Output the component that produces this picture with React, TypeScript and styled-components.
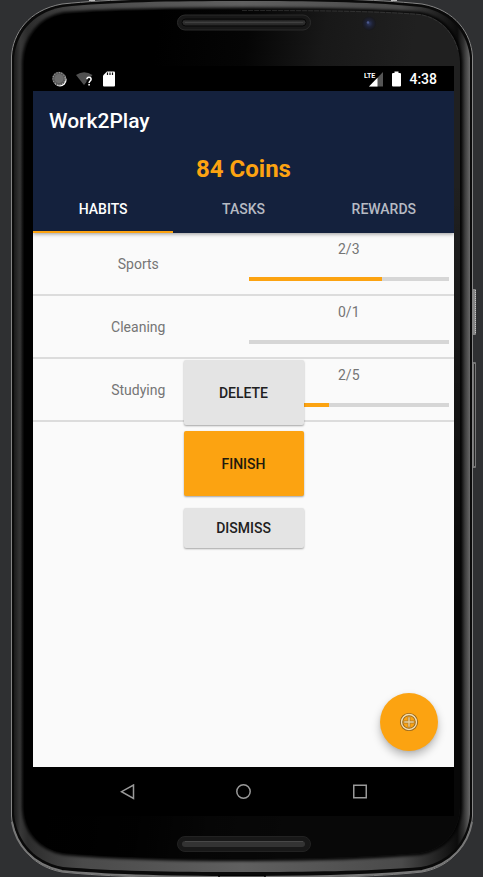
import React, { useState } from "react";
import styled, { createGlobalStyle } from "styled-components";

const amber = "#fca311";
const navy = "#14213d";

const GlobalStyle = createGlobalStyle`
  *, *::before, *::after { box-sizing: border-box; }
  body { margin: 0; background: #2f3032; font-family: Roboto, "Noto Sans", sans-serif; }
  button { font-family: inherit; cursor: pointer; }
`;

const Device = styled.div`
  position: relative;
  display: flex;
  min-height: 100vh;
  padding: 66px 29px 61px 33px;
  overflow: hidden;
`;

const Casing = styled.svg`
  position: absolute;
  inset: 0;
  width: 100%;
  height: 100%;
`;

const Screen = styled.div`
  position: relative;
  flex: 1;
  min-width: 0;
  display: flex;
  flex-direction: column;
  background: #000;
`;

const StatusBar = styled.div`
  display: flex;
  align-items: center;
  justify-content: space-between;
  height: 25px;
  padding: 0 17px 0 18px;
  color: #fff;
`;

const StatusGroup = styled.div<{ $gap: number }>`
  display: flex;
  align-items: center;
  gap: ${(p) => p.$gap}px;
`;

const Clock = styled.time`
  font-size: 14px;
  line-height: 16px;
  font-weight: 500;
`;

const AppBar = styled.header`
  position: relative;
  z-index: 1;
  background: ${navy};
  box-shadow: 0 1px 4px rgba(0, 0, 0, 0.4);
  clip-path: inset(0 0 -8px 0);
`;

const Title = styled.h1`
  margin: 0;
  padding: 18px 16px 0;
  font-size: 21px;
  line-height: 24px;
  font-weight: 500;
  color: #fff;
`;

const Balance = styled.p`
  margin: 0;
  padding-top: 22px;
  font-size: 24px;
  line-height: 28px;
  font-weight: 700;
  text-align: center;
  color: ${amber};
`;

const Tabs = styled.div`
  display: grid;
  grid-template-columns: repeat(3, 1fr);
`;

const Tab = styled.button<{ $active: boolean }>`
  height: 50px;
  padding: 3px 0 0;
  border: 0;
  border-bottom: 2px solid ${(p) => (p.$active ? amber : "transparent")};
  background: none;
  font-size: 14px;
  line-height: 16px;
  font-weight: 500;
  color: ${(p) => (p.$active ? "#fff" : "#b6bac3")};
`;

const Content = styled.main`
  position: relative;
  flex: 1;
  min-height: 400px;
  background: #fafafa;
`;

const HabitList = styled.ul`
  margin: 0;
  padding: 0;
  list-style: none;
`;

const HabitRow = styled.li`
  display: grid;
  grid-template-columns: 1fr 1fr;
  height: 63px;
  border-bottom: 2px solid #dcdcdc;
  font-size: 14px;
  line-height: 16px;
  color: #757575;
`;

const HabitName = styled.label`
  place-self: center;
`;

const HabitStatus = styled.div`
  display: flex;
  flex-direction: column;
  align-items: center;
  gap: 20px;
  padding: 8px 5px 0;
`;

const Meter = styled.progress`
  appearance: none;
  width: 100%;
  height: 4px;
  border: 0;
  background: #d6d6d6;
  &::-webkit-progress-bar { background: #d6d6d6; }
  &::-webkit-progress-value { background: ${amber}; }
  &::-moz-progress-bar { background: ${amber}; }
`;

const ActionMenu = styled.div`
  position: absolute;
  top: 127px;
  left: 0;
  right: 0;
  width: 120px;
  margin: 0 auto;
  display: flex;
  flex-direction: column;
  gap: 6px;
`;

const ActionButton = styled.button<{ $primary?: boolean; $compact?: boolean }>`
  height: ${(p) => (p.$compact ? 40 : 65)}px;
  margin-top: ${(p) => (p.$compact ? 6 : 0)}px;
  padding: 0;
  border: 0;
  border-radius: 2px;
  background: ${(p) => (p.$primary ? amber : "#e4e4e4")};
  box-shadow: 0 1px 2px rgba(0, 0, 0, 0.35);
  font-size: 14px;
  line-height: 16px;
  font-weight: 500;
  color: ${(p) => (p.$primary ? "#211a0d" : "#202020")};
`;

const AddButton = styled.button`
  position: absolute;
  right: 16px;
  bottom: 16px;
  width: 58px;
  height: 58px;
  padding: 0;
  border: 0;
  border-radius: 50%;
  display: grid;
  place-items: center;
  background: ${amber};
  box-shadow: 0 5px 9px rgba(0, 0, 0, 0.25), 0 1px 3px rgba(0, 0, 0, 0.08);
`;

const NavBar = styled.nav`
  display: flex;
  align-items: center;
  justify-content: center;
  gap: 92px;
  height: 49px;
`;

const NavButton = styled.button`
  display: grid;
  place-items: center;
  width: 24px;
  height: 24px;
  padding: 0;
  border: 0;
  background: none;
`;

const OUTER =
  "M11.5 56C13 34 28 10 62 4C110 -1 170 -2 242 -2C314 -2 374 -1 422 4C456 10 471 34 472.5 56V816C471 838 456 866 422 872C374 877 314 878 242 878C170 878 110 877 62 872C28 866 13 838 11.5 816Z";
const RIM =
  "M14 58C16 36 30 13 63 7C110 2 170 1 242 1C314 1 374 2 421 7C454 13 468 36 470 58V814C468 836 454 861 421 867C374 871 314 872 242 872C170 872 110 871 63 867C30 861 16 836 14 814Z";
const FACE =
  "M24 62C25 38 40 18 64 14C110 10 170 9.500 242 9.500C314 9.500 374 10 420 14C444 18 459 38 460 62V808C459 832 444 849 420 853C374 857 314 859 242 859C170 859 110 857 64 853C40 849 25 832 24 808Z";

function DeviceCasing() {
  return (
    <Casing viewBox="0 0 483 877" preserveAspectRatio="none" aria-hidden="true">
      <defs>
        <linearGradient id="face" x1="0.3" y1="0.05" x2="0.85" y2="0.2">
          <stop offset="0" stopColor="#000" />
          <stop offset="0.35" stopColor="#050505" />
          <stop offset="0.65" stopColor="#181818" />
          <stop offset="1" stopColor="#202020" />
        </linearGradient>
        <linearGradient id="fade" x1="0" y1="0" x2="0" y2="1">
          <stop offset="0.2" stopColor="#000" stopOpacity="0" />
          <stop offset="0.7" stopColor="#000" stopOpacity="0.75" />
        </linearGradient>
        <linearGradient id="rim" x1="0" y1="0" x2="1" y2="0">
          <stop offset="0" stopColor="#1a1a1a" />
          <stop offset="0.014" stopColor="#383838" />
          <stop offset="0.03" stopColor="#2c2c2c" />
          <stop offset="0.15" stopColor="#4a4a4a" />
          <stop offset="0.5" stopColor="#606060" />
          <stop offset="0.85" stopColor="#4a4a4a" />
          <stop offset="0.972" stopColor="#0c0c0c" />
          <stop offset="0.986" stopColor="#303030" />
          <stop offset="1" stopColor="#686868" />
        </linearGradient>
        <linearGradient id="slot" x1="0" y1="0" x2="0" y2="1">
          <stop offset="0" stopColor="#111" />
          <stop offset="0.4" stopColor="#333" />
          <stop offset="1" stopColor="#222" />
        </linearGradient>
        <radialGradient id="lens">
          <stop offset="0" stopColor="#2f3962" />
          <stop offset="0.5" stopColor="#1e2235" />
          <stop offset="1" stopColor="#18181b" />
        </radialGradient>
        <filter id="soft" x="-5%" y="-5%" width="110%" height="110%">
          <feGaussianBlur stdDeviation="1.5" />
        </filter>
      </defs>
      <rect x="472" y="289" width="4" height="46" rx="1" fill="#858585" />
      <path d="M475.500 290V334" stroke="#c4c4c4" strokeDasharray="1 1" />
      <rect x="472" y="362" width="4" height="106" rx="1" fill="#777" />
      <path d="M474.500 364V466" stroke="#252525" />
      <path d={OUTER} fill="#0a0a0a" stroke="#858585" />
      <path d={RIM} fill="url(#rim)" />
      <path d={FACE} fill="none" stroke="#000" strokeWidth="4" filter="url(#soft)" />
      <path d={FACE} fill="url(#face)" />
      <path d={FACE} fill="url(#fade)" />
      <path d="M242 10.500C314 10.500 374 11 420 14.500C440 18 453 32 458 50" fill="none" stroke="#484848" strokeDasharray="5 1" strokeWidth="0.5" />
      <path d="M12 822C16 844 31 864 62 871C110 876 170 877 242 877C314 877 374 876 422 871C453 864 468 844 472 822" fill="none" stroke="#777" strokeWidth="2" />
      <rect x="177.500" y="15" width="133" height="15" rx="7.500" fill="#181818" stroke="#2b2b2b" />
      <rect x="182" y="19" width="124" height="7" rx="3.500" fill="url(#slot)" stroke="#070707" />
      <path d="M185 22.500H303" stroke="#404040" />
      <rect x="177.500" y="836.500" width="133" height="15" rx="7.500" fill="#181818" stroke="#222" />
      <rect x="182" y="841" width="123" height="6" rx="3" fill="#333" />
      <path d="M185 841.500H303" stroke="#484848" />
      <circle cx="369" cy="23.500" r="7" fill="url(#lens)" />
      <circle cx="368" cy="22.500" r="1.200" fill="#4c598e" />
      <path d="M89 0.500h6M391 0.500h6" stroke="#bbb" />
      <path d="M219 877v-1.500h46v1.500" fill="none" stroke="#050505" strokeWidth="1.500" />
    </Casing>
  );
}

const SyncIcon = () => (
  <svg width="16" height="16" viewBox="0 0 16 16" aria-hidden="true">
    <circle cx="9" cy="8.800" r="6.600" fill="#fff" />
    <circle cx="8" cy="7.600" r="6.800" fill="#555" />
    <circle cx="8" cy="7.600" r="6" fill="none" stroke="#999" strokeWidth="1.200" strokeDasharray="1 1.500" />
    <circle cx="8" cy="7.600" r="4.600" fill="#6c6c6c" />
  </svg>
);

const WifiIcon = () => (
  <svg width="18" height="16" viewBox="0 0 18 16" aria-hidden="true">
    <path d="M0 4Q8 -1.500 16.500 4L8 14Z" fill="#505050" />
    <path d="M10.500 6h6.500v9h-6.500z" fill="#000" opacity="0.7" />
    <path d="M10.900 8.200C10.900 5.500 15.100 5.500 15.100 8.200C15.100 9.900 13.100 10 13.100 11.900" fill="none" stroke="#fff" strokeWidth="1.500" />
    <rect x="12.300" y="12.900" width="1.600" height="1.600" fill="#fff" />
  </svg>
);

const SdCardIcon = () => (
  <svg width="12" height="16" viewBox="0 0 12 16" aria-hidden="true">
    <path d="M4 0.500H11a1 1 0 0 1 1 1V14.500a1 1 0 0 1-1 1H1a1 1 0 0 1-1-1V4.500Z" fill="#fff" />
    <path d="M4.500 1.500v2.500M7 1.500v2.500M9.500 1.500v2.500" stroke="#111" strokeWidth="1.200" />
  </svg>
);

const SignalIcon = () => (
  <svg width="20" height="16" viewBox="0 0 20 16" aria-label="LTE signal">
    <path d="M19 1V15.500H5Z" fill="#555" />
    <path d="M13.500 6.700V15.500H5Z" fill="#fff" />
    <path d="M0 0h12v7.500H0z" fill="#000" />
    <text x="0" y="7" fontFamily="Roboto, sans-serif" fontSize="7" fontWeight="700" fill="#fff">
      LTE
    </text>
  </svg>
);

const BatteryIcon = () => (
  <svg width="9" height="16" viewBox="0 0 9 16" aria-hidden="true">
    <path d="M2.500 0.500h4V2H8q1 0 1 1V14.500q0 1-1 1H1q-1 0-1-1V3q0-1 1-1H2.500Z" fill="#fff" />
  </svg>
);

const AddIcon = () => (
  <svg width="20" height="20" viewBox="0 0 20 20" fill="none" aria-hidden="true">
    <circle cx="10" cy="10" r="7.500" stroke="#8f6420" strokeWidth="3.200" />
    <circle cx="10" cy="10" r="7.500" stroke="#f7dfae" strokeWidth="1.400" />
    <path d="M10 4.500v11M4.500 10h11" stroke="#b07a25" strokeWidth="2.800" />
    <path d="M10 5.200v9.600M5.200 10h9.600" stroke="#e8cf9d" strokeWidth="1.400" />
  </svg>
);

const habits = [
  { name: "Sports", done: 2, goal: 3 },
  { name: "Cleaning", done: 0, goal: 1 },
  { name: "Studying", done: 2, goal: 5 },
];

const tabs = ["HABITS", "TASKS", "REWARDS"];

export default function App() {
  const [active, setActive] = useState(tabs[0]);

  return (
    <>
      <GlobalStyle />
      <Device>
        <DeviceCasing />
        <Screen>
          <StatusBar>
            <StatusGroup $gap={9}>
              <SyncIcon />
              <WifiIcon />
              <SdCardIcon />
            </StatusGroup>
            <StatusGroup $gap={8}>
              <SignalIcon />
              <BatteryIcon />
              <Clock>4:38</Clock>
            </StatusGroup>
          </StatusBar>
          <AppBar>
            <Title>Work2Play</Title>
            <Balance>84 Coins</Balance>
            <Tabs role="tablist">
              {tabs.map((tab) => (
                <Tab
                  key={tab}
                  role="tab"
                  aria-selected={tab === active}
                  $active={tab === active}
                  onClick={() => setActive(tab)}
                >
                  {tab}
                </Tab>
              ))}
            </Tabs>
          </AppBar>
          <Content>
            <HabitList>
              {habits.map(({ name, done, goal }) => (
                <HabitRow key={name}>
                  <HabitName htmlFor={name}>{name}</HabitName>
                  <HabitStatus>
                    <span>{`${done}/${goal}`}</span>
                    <Meter id={name} value={done} max={goal} />
                  </HabitStatus>
                </HabitRow>
              ))}
            </HabitList>
            <ActionMenu>
              <ActionButton>DELETE</ActionButton>
              <ActionButton $primary>FINISH</ActionButton>
              <ActionButton $compact>DISMISS</ActionButton>
            </ActionMenu>
            <AddButton aria-label="Add habit">
              <AddIcon />
            </AddButton>
          </Content>
          <NavBar>
            <NavButton aria-label="Back">
              <svg width="16" height="16" viewBox="0 0 16 16" fill="none" stroke="#999" strokeWidth="1.500">
                <path d="M13.500 1V14.500L1.500 7.700Z" />
              </svg>
            </NavButton>
            <NavButton aria-label="Home">
              <svg width="16" height="16" viewBox="0 0 16 16" fill="none" stroke="#999" strokeWidth="1.500">
                <circle cx="7.500" cy="7.500" r="6.700" />
              </svg>
            </NavButton>
            <NavButton aria-label="Overview">
              <svg width="16" height="16" viewBox="0 0 16 16" fill="none" stroke="#999" strokeWidth="1.500">
                <rect x="1.750" y="1.250" width="12.500" height="12.500" />
              </svg>
            </NavButton>
          </NavBar>
        </Screen>
      </Device>
    </>
  );
}
